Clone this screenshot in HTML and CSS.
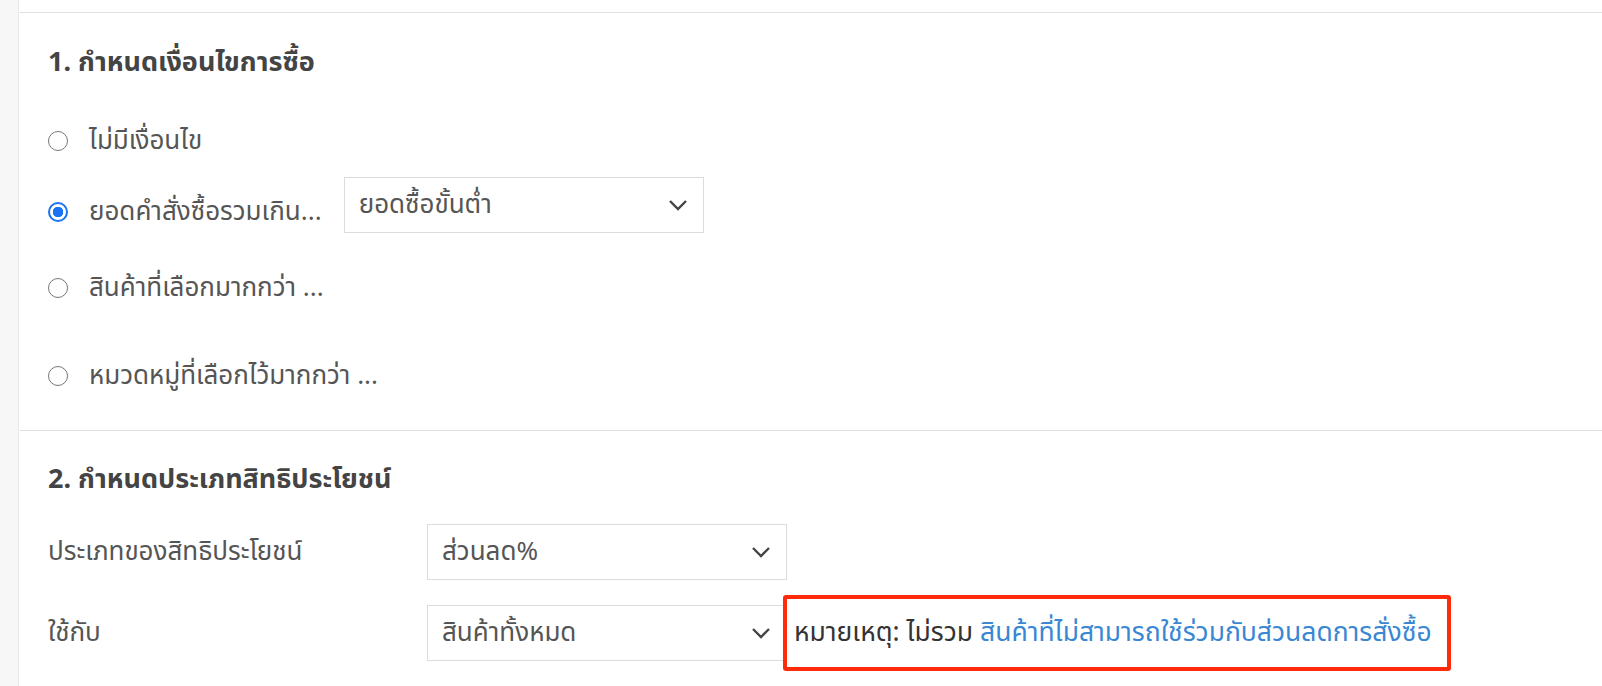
FILE: index.html
```html
<!DOCTYPE html>
<html lang="th">
<head>
    <meta charset="UTF-8">
    <meta name="viewport" content="width=device-width, initial-scale=1.0">
    <title>ตั้งค่าโปรโมชั่น</title>
    <link rel="stylesheet" href="styles.css">
</head>
<body>
    <div class="page">
        <aside class="rail"></aside>
        <main class="panel">
            <section class="block conditions">
                <h2 class="block-title">1. กำหนดเงื่อนไขการซื้อ</h2>
                <label class="option row-1">
                    <input type="radio" name="cond" class="radio">
                    <span class="option-text">ไม่มีเงื่อนไข</span>
                </label>
                <div class="option row-2">
                    <label class="option-label">
                        <input type="radio" name="cond" class="radio" checked>
                        <span class="option-text">ยอดคำสั่งซื้อรวมเกิน...</span>
                    </label>
                    <div class="select select-min">
                        <span>ยอดซื้อขั้นต่ำ</span>
                        <svg class="chevron" viewBox="0 0 20 12"><polyline points="2,2 10,10 18,2"/></svg>
                    </div>
                </div>
                <label class="option row-3">
                    <input type="radio" name="cond" class="radio">
                    <span class="option-text">สินค้าที่เลือกมากกว่า ...</span>
                </label>
                <label class="option row-4">
                    <input type="radio" name="cond" class="radio">
                    <span class="option-text">หมวดหมู่ที่เลือกไว้มากกว่า ...</span>
                </label>
            </section>

            <section class="block benefits">
                <h2 class="block-title">2. กำหนดประเภทสิทธิประโยชน์</h2>
                <div class="field field-type">
                    <span class="field-label">ประเภทของสิทธิประโยชน์</span>
                    <div class="select">
                        <span>ส่วนลด%</span>
                        <svg class="chevron" viewBox="0 0 20 12"><polyline points="2,2 10,10 18,2"/></svg>
                    </div>
                </div>
                <div class="field field-apply">
                    <span class="field-label">ใช้กับ</span>
                    <div class="select">
                        <span>สินค้าทั้งหมด</span>
                        <svg class="chevron" viewBox="0 0 20 12"><polyline points="2,2 10,10 18,2"/></svg>
                    </div>
                    <div class="note">
                        หมายเหตุ: ไม่รวม&nbsp;<a href="#" class="note-link">สินค้าที่ไม่สามารถใช้ร่วมกับส่วนลดการสั่งซื้อ</a>
                    </div>
                </div>
            </section>
        </main>
    </div>
</body>
</html>
```

FILE: styles.css
```css
body {
    margin: 0;
    font-family: "Noto Sans", "Noto Sans Thai", "Liberation Sans", sans-serif;
    color: #555;
    background: #fff;
    overflow: hidden;
}
.page {
    display: flex;
    height: 686px;
}
.rail {
    width: 18px;
    flex-shrink: 0;
    background: #f7f7f7;
    border-right: 1px solid #e8e8e8;
}
.panel {
    flex: 1;
    padding-top: 12px;
    padding-left: 1px;
}
.block {
    border-top: 1px solid #e0e0e0;
    padding-left: 28px;
}
.conditions {
    height: 418px;
    padding-top: 30px;
    box-sizing: border-box;
}
.block-title {
    margin: 0;
    font-size: 27px;
    line-height: 36px;
    font-weight: bold;
    color: #444;
}
.option {
    display: flex;
    align-items: center;
    font-size: 26px;
    cursor: pointer;
}
.option-label {
    display: flex;
    align-items: center;
    cursor: pointer;
    height: 56px;
    box-sizing: border-box;
    padding-top: 14px;
}
.option-text {
    margin-left: 21px;
}
.radio {
    appearance: none;
    margin: 0;
    width: 20px;
    height: 20px;
    flex-shrink: 0;
    border: 1.5px solid #777;
    border-radius: 50%;
    box-sizing: border-box;
    background: #fff;
}
.radio:checked {
    border: 2px solid #1a73f5;
    background: radial-gradient(circle, #1a73f5 0, #1a73f5 5px, #fff 5.5px);
}
.row-1 {
    height: 40px;
    margin-top: 42px;
}
.row-2 {
    margin-top: 16px;
    align-items: flex-start;
    cursor: default;
}
.row-3 {
    height: 40px;
    margin-top: 35px;
}
.row-4 {
    height: 40px;
    margin-top: 48px;
}
.select {
    width: 360px;
    height: 56px;
    flex-shrink: 0;
    box-sizing: border-box;
    border: 1px solid #dcdcdc;
    display: flex;
    align-items: center;
    justify-content: space-between;
    padding: 0 15px 0 14px;
    font-size: 26px;
    color: #555;
    background: #fff;
}
.select-min {
    margin-left: 22px;
}
.chevron {
    width: 20px;
    height: 12px;
    fill: none;
    stroke: #444;
    stroke-width: 2.4;
}
.benefits {
    padding-top: 29px;
}
.field {
    display: flex;
    align-items: center;
    font-size: 26px;
}
.field-label {
    width: 379px;
    flex-shrink: 0;
}
.field-type {
    margin-top: 28px;
}
.field-apply {
    margin-top: 15px;
}
.note {
    margin-left: -4px;
    width: 668px;
    height: 76px;
    flex-shrink: 0;
    box-sizing: border-box;
    border: 4px solid #ff2a0a;
    border-radius: 3px;
    display: flex;
    align-items: center;
    padding-left: 7px;
    font-size: 26.5px;
    color: #333;
    background: #fff;
}
.note-link {
    color: #3a87d4;
    text-decoration: none;
}
```
